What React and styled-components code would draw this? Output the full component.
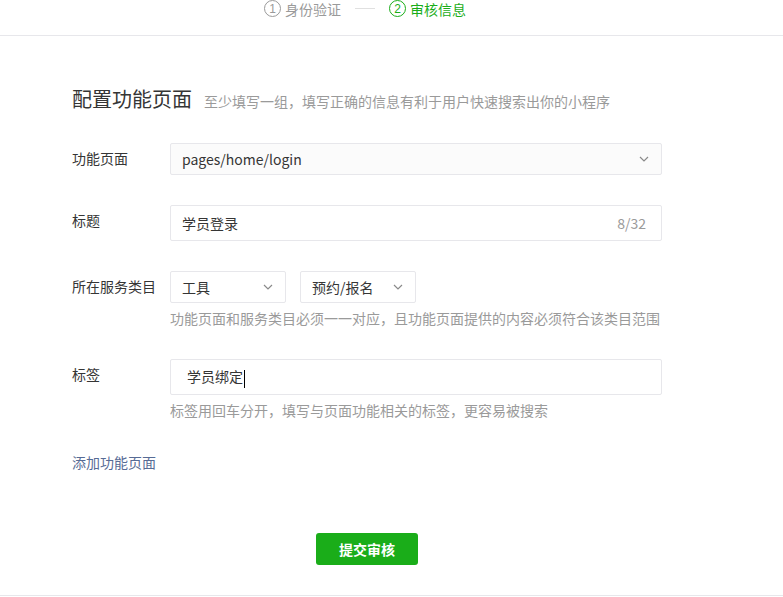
import React from "react";
import styled, { createGlobalStyle } from "styled-components";

const Global = createGlobalStyle`
  html, body { margin: 0; padding: 0; background: #fff; }
  body { font-family: "Noto Sans CJK SC", "Noto Sans", sans-serif; color: #353535; }
  * { box-sizing: border-box; }
`;

const Page = styled.div`
  width: 783px;
  height: 597px;
  overflow: hidden;
  background: #fff;
`;

const Steps = styled.div`
  height: 36px;
  border-bottom: 1px solid #e7e7eb;
  display: flex;
  align-items: flex-start;
  padding-left: 264px;
`;

const Step = styled.div`
  display: flex;
  align-items: center;
  gap: 4px;
  font-size: 14px;
  line-height: 16px;
  color: ${(p) => (p.$active ? "#1aad19" : "#9a9a9a")};
`;

const Circle = styled.span`
  width: 17px;
  height: 17px;
  border-radius: 50%;
  border: 1px solid currentColor;
  display: inline-flex;
  align-items: center;
  justify-content: center;
  font-size: 12px;
  line-height: 1;
  font-family: "Liberation Sans", sans-serif;
`;

const StepLine = styled.span`
  width: 20px;
  height: 1px;
  background: #e0e0e0;
  margin: 8px 14px 0;
`;

const Content = styled.div`
  padding: 50px 0 0 72px;
  height: 560px;
  border-bottom: 1px solid #e7e7eb;
`;

const TitleRow = styled.div`
  display: flex;
  align-items: baseline;
  gap: 12px;
  height: 26px;
`;

const Title = styled.h2`
  margin: 0;
  font-size: 20px;
  font-weight: 400;
  line-height: 26px;
  color: #353535;
`;

const Sub = styled.span`
  font-size: 14px;
  color: #9a9a9a;
  white-space: nowrap;
`;

const Row = styled.div`
  display: grid;
  grid-template-columns: 98px 492px;
  margin-top: ${(p) => p.$mt}px;
`;

const Label = styled.div`
  font-size: 14px;
  line-height: 30px;
  color: #353535;
`;

const Field = styled.div`
  display: flex;
  flex-direction: column;
`;

const Box = styled.div`
  height: ${(p) => p.$h}px;
  width: ${(p) => (p.$w ? `${p.$w}px` : "100%")};
  border: 1px solid #e7e7eb;
  background: ${(p) => (p.$gray ? "#fbfbfb" : "#fff")};
  border-radius: 2px;
  display: flex;
  align-items: center;
  justify-content: space-between;
  padding: 0 ${(p) => p.$pr}px 0 ${(p) => p.$pl}px;
  font-size: 14px;
  color: #353535;
`;

const SelectGroup = styled.div`
  display: flex;
  gap: 14px;
`;

const Counter = styled.span`
  color: #9a9a9a;
  font-size: 14px;
`;

const Caret = styled.span`
  display: inline-block;
  width: 1px;
  height: 18px;
  background: #000;
  margin-left: 1px;
  vertical-align: middle;
`;

const Help = styled.div`
  font-size: 14px;
  line-height: 18px;
  color: #9a9a9a;
  margin-top: 6px;
  white-space: nowrap;
`;

const Link = styled.a`
  display: block;
  font-size: 14px;
  line-height: 20px;
  color: #576b95;
  text-decoration: none;
  margin-top: 33px;
`;

const Actions = styled.div`
  width: 590px;
  display: flex;
  justify-content: center;
  margin-top: 61px;
`;

const Button = styled.button`
  width: 102px;
  height: 32px;
  border: none;
  border-radius: 3px;
  background: #1aad19;
  color: #fff;
  font-family: inherit;
  font-size: 14px;
  font-weight: 700;
`;

const Chevron = () => (
  <svg width="10" height="6" viewBox="0 0 10 6">
    <path d="M1 1l4 4 4-4" fill="none" stroke="#8a8a8a" strokeWidth="1.2" />
  </svg>
);

export default function App() {
  return (
    <Page>
      <Global />
      <Steps>
        <Step>
          <Circle>1</Circle>身份验证
        </Step>
        <StepLine />
        <Step $active>
          <Circle>2</Circle>审核信息
        </Step>
      </Steps>
      <Content>
        <TitleRow>
          <Title>配置功能页面</Title>
          <Sub>至少填写一组，填写正确的信息有利于用户快速搜索出你的小程序</Sub>
        </TitleRow>

        <Row $mt={31}>
          <Label>功能页面</Label>
          <Box $h={32} $gray $pl={11} $pr={12}>
            <span>pages/home/login</span>
            <Chevron />
          </Box>
        </Row>

        <Row $mt={30}>
          <Label>标题</Label>
          <Box $h={36} $pl={11} $pr={15}>
            <span>学员登录</span>
            <Counter>8/32</Counter>
          </Box>
        </Row>

        <Row $mt={30}>
          <Label>所在服务类目</Label>
          <Field>
            <SelectGroup>
              <Box $h={32} $w={116} $pl={11} $pr={12}>
                <span>工具</span>
                <Chevron />
              </Box>
              <Box $h={32} $w={116} $pl={11} $pr={12}>
                <span>预约/报名</span>
                <Chevron />
              </Box>
            </SelectGroup>
            <Help>功能页面和服务类目必须一一对应，且功能页面提供的内容必须符合该类目范围</Help>
          </Field>
        </Row>

        <Row $mt={32}>
          <Label>标签</Label>
          <Field>
            <Box $h={36} $pl={16} $pr={15}>
              <span>
                学员绑定
                <Caret />
              </span>
            </Box>
            <Help>标签用回车分开，填写与页面功能相关的标签，更容易被搜索</Help>
          </Field>
        </Row>

        <Link>添加功能页面</Link>
        <Actions>
          <Button>提交审核</Button>
        </Actions>
      </Content>
    </Page>
  );
}
